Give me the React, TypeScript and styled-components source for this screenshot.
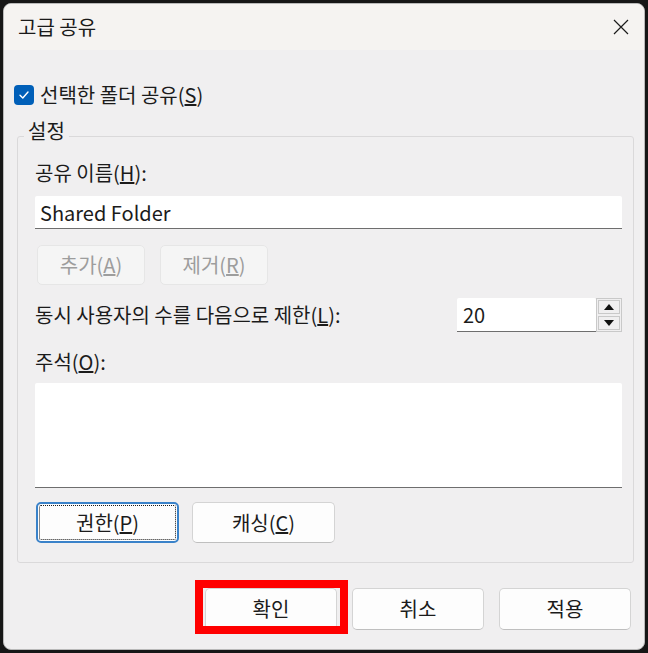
import React from "react";
import styled, { createGlobalStyle, css } from "styled-components";

const GlobalStyle = createGlobalStyle`
  html, body {
    margin: 0;
    padding: 0;
  }
  body {
    background: #161616;
    font-family: "Noto Sans CJK KR", "Noto Sans", sans-serif;
    color: #1b1b1b;
  }
`;

const Window = styled.div`
  margin: 3px;
  width: 642px;
  height: 647px;
  box-sizing: border-box;
  border: 1px solid #b9b9b9;
  border-radius: 8px;
  background: #f0eff0;
  overflow: hidden;
  display: flex;
  flex-direction: column;
  font-size: 20px;
  line-height: 24px;
`;

const TitleBar = styled.div`
  height: 46px;
  flex: none;
  display: flex;
  align-items: center;
  justify-content: space-between;
  padding-left: 14px;
  background: #f5f3f1;
`;

const Title = styled.span`
  font-size: 20px;
  color: #1a1a1a;
`;

const CloseBox = styled.div`
  width: 46px;
  height: 46px;
  display: flex;
  align-items: center;
  justify-content: center;
`;

const Body = styled.div`
  flex: 1;
  display: flex;
  flex-direction: column;
  padding: 33px 10px 0 10px;
`;

const CheckRow = styled.label`
  display: flex;
  align-items: center;
  gap: 6px;
  height: 24px;
`;

const CheckBox = styled.span`
  width: 20px;
  height: 20px;
  box-sizing: border-box;
  border-radius: 4px;
  background: #005fb8;
  display: flex;
  align-items: center;
  justify-content: center;
`;

const Group = styled.fieldset`
  margin: 14px 0 0 3px;
  padding: 10px 11px 19px 17px;
  border: 1px solid #dad9da;
  border-radius: 3px;
  min-width: 0;
  display: flex;
  flex-direction: column;
`;

const Legend = styled.legend`
  padding: 0 4px 10px 4px;
  margin-left: -11px;
  line-height: 20px;
`;

const Label = styled.div<{ $top?: number }>`
  height: 24px;
  margin-top: ${(p) => p.$top ?? 0}px;
`;

const fieldBase = css`
  box-sizing: border-box;
  border: none;
  border-bottom: 1px solid #6e6e6e;
  background: #ffffff;
  font-family: inherit;
  font-size: 20px;
  color: #1b1b1b;
  outline: none;
  border-radius: 2px 2px 0 0;
`;

const TextField = styled.input`
  ${fieldBase};
  height: 33px;
  margin-top: 11px;
  padding: 0 5px;
  width: 100%;
`;

const Comment = styled.textarea`
  ${fieldBase};
  height: 105px;
  margin-top: 9px;
  width: 100%;
  resize: none;
  padding: 4px 5px;
`;

const ButtonRow = styled.div<{ $top: number; $gap: number; $left?: number }>`
  display: flex;
  gap: ${(p) => p.$gap}px;
  margin-top: ${(p) => p.$top}px;
  padding-left: ${(p) => p.$left ?? 0}px;
`;

const Button = styled.button<{ $w: number; $h: number; $disabled?: boolean; $focus?: boolean }>`
  position: relative;
  width: ${(p) => p.$w}px;
  height: ${(p) => p.$h}px;
  box-sizing: border-box;
  font-family: inherit;
  font-size: 20px;
  line-height: 24px;
  color: #1b1b1b;
  background: #fdfdfd;
  border: 1px solid #d4d4d4;
  border-bottom-color: #bfbfbf;
  border-radius: 5px;
  padding: 0;
  ${(p) =>
    p.$disabled &&
    css`
      background: #f5f5f5;
      border-color: #e6e6e6;
      color: #9d9d9d;
    `}
  ${(p) =>
    p.$focus &&
    css`
      border: 2px solid #3a82c9;
      &::after {
        content: "";
        position: absolute;
        inset: 1px;
        border: 1px dotted #1b1b1b;
        border-radius: 2px;
      }
    `}
`;

const LimitRow = styled.div`
  display: flex;
  align-items: center;
  justify-content: space-between;
  margin-top: 13px;
`;

const SpinBox = styled.div`
  display: flex;
  align-items: stretch;
  height: 34px;
`;

const NumberField = styled.input`
  ${fieldBase};
  width: 139px;
  height: 34px;
  padding: 0 6px;
`;

const SpinButtons = styled.div`
  width: 26px;
  box-sizing: border-box;
  border: 1px solid #c9c9c9;
  padding: 1px;
  display: flex;
  flex-direction: column;
  gap: 2px;
  background: #f0eff0;
`;

const SpinButton = styled.div`
  flex: 1;
  border: 1px solid #c9c9c9;
  display: flex;
  align-items: center;
  justify-content: center;
`;

const Arrow = styled.span<{ $up?: boolean }>`
  width: 0;
  height: 0;
  border-left: 5px solid transparent;
  border-right: 5px solid transparent;
  ${(p) =>
    p.$up ? "border-bottom: 6px solid #111;" : "border-top: 6px solid #111;"}
`;

const Footer = styled.div`
  display: flex;
  justify-content: flex-end;
  gap: 15px;
  margin-top: 25px;
  padding-right: 3px;
`;

const Highlight = styled.div`
  position: relative;
`;

const RedFrame = styled.span`
  position: absolute;
  top: -8px;
  left: -10px;
  right: -11px;
  bottom: -4px;
  border: 8px solid #ff0000;
  pointer-events: none;
`;

const Check = () => (
  <svg width="14" height="14" viewBox="0 0 14 14">
    <path d="M3 7.2 L5.8 10 L11 4" fill="none" stroke="#ffffff" strokeWidth="1.4" strokeLinecap="round" strokeLinejoin="round" />
  </svg>
);

const CloseIcon = () => (
  <svg width="16" height="16" viewBox="0 0 16 16">
    <path d="M1 1 L15 15 M15 1 L1 15" stroke="#1b1b1b" strokeWidth="1.2" />
  </svg>
);

const App = () => {
  return (
    <>
      <GlobalStyle />
      <Window>
        <TitleBar>
          <Title>고급 공유</Title>
          <CloseBox>
            <CloseIcon />
          </CloseBox>
        </TitleBar>
        <Body>
          <CheckRow>
            <CheckBox>
              <Check />
            </CheckBox>
            <span>
              선택한 폴더 공유(<u>S</u>)
            </span>
          </CheckRow>

          <Group>
            <Legend>설정</Legend>
            <Label>
              공유 이름(<u>H</u>):
            </Label>
            <TextField defaultValue="Shared Folder" />
            <ButtonRow $top={16} $gap={15} $left={2}>
              <Button $w={108} $h={40} $disabled>
                추가(<u>A</u>)
              </Button>
              <Button $w={108} $h={40} $disabled>
                제거(<u>R</u>)
              </Button>
            </ButtonRow>
            <LimitRow>
              <span>
                동시 사용자의 수를 다음으로 제한(<u>L</u>):
              </span>
              <SpinBox>
                <NumberField defaultValue="20" />
                <SpinButtons>
                  <SpinButton>
                    <Arrow $up />
                  </SpinButton>
                  <SpinButton>
                    <Arrow />
                  </SpinButton>
                </SpinButtons>
              </SpinBox>
            </LimitRow>
            <Label $top={18}>
              주석(<u>O</u>):
            </Label>
            <Comment readOnly />
            <ButtonRow $top={14} $gap={13} $left={1}>
              <Button $w={143} $h={41} $focus>
                권한(<u>P</u>)
              </Button>
              <Button $w={143} $h={41}>
                캐싱(<u>C</u>)
              </Button>
            </ButtonRow>
          </Group>

          <Footer>
            <Highlight>
              <Button $w={132} $h={42}>
                확인
              </Button>
              <RedFrame />
            </Highlight>
            <Button $w={132} $h={42}>
              취소
            </Button>
            <Button $w={132} $h={42}>
              적용
            </Button>
          </Footer>
        </Body>
      </Window>
    </>
  );
};

export default App;
